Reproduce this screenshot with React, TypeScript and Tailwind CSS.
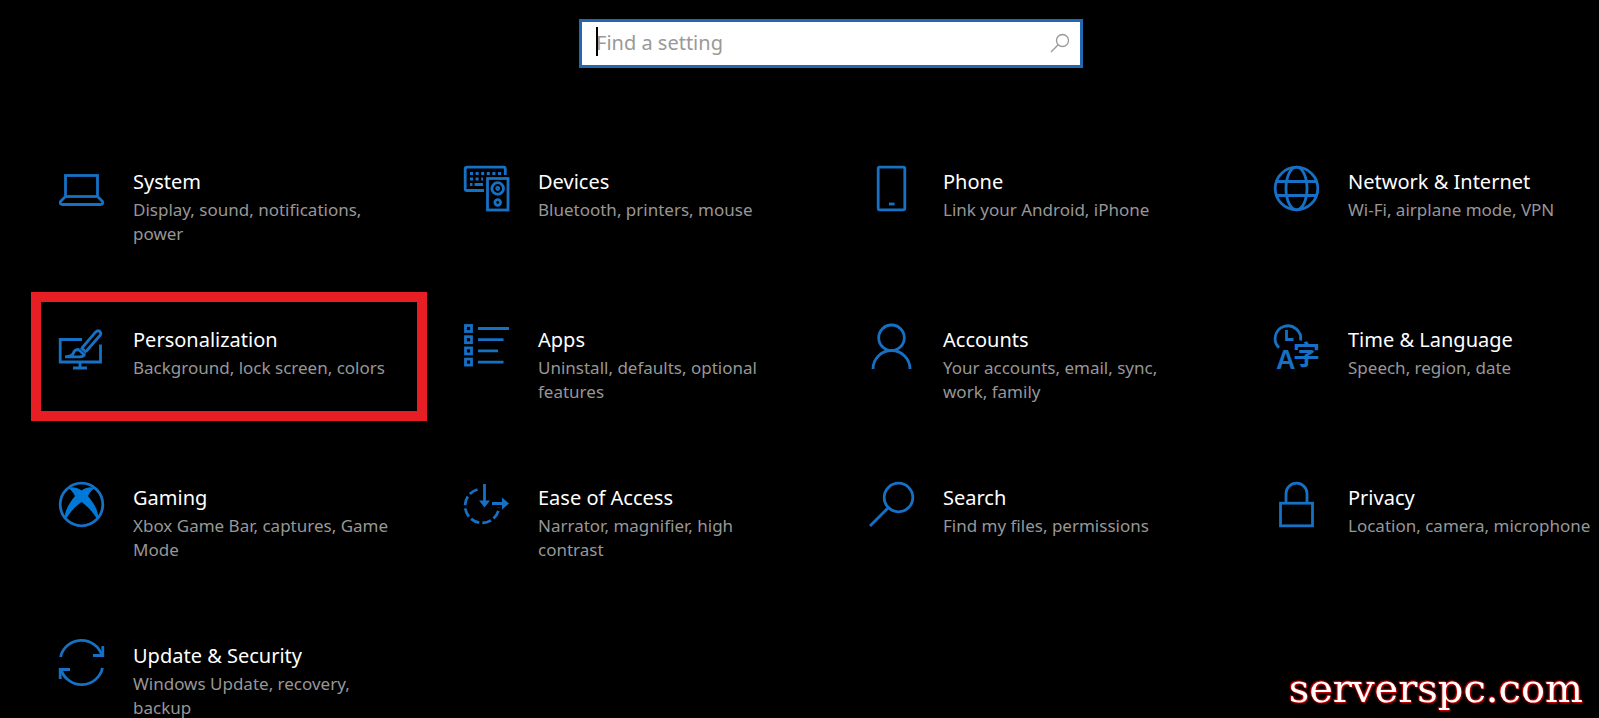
import type { ReactNode } from "react";

type Category = {
  title: string;
  description: string;
  icon: ReactNode;
  highlight?: boolean;
};

const categories: Category[] = [
  {
    title: "System",
    description: "Display, sound, notifications, power",
    icon: (
      <>
        <rect x="6.5" y="9.5" width="32" height="21" />
        <path d="M6 31 L1.5 35.5 Q0.5 38.5 3.5 38.5 H41.5 Q44.5 38.5 43.5 35.5 L39 31" />
      </>
    ),
  },
  {
    title: "Devices",
    description: "Bluetooth, printers, mouse",
    icon: (
      <>
        <path d="M20 24.5 H3 Q1.2 24.5 1.2 22.7 V3 Q1.2 1.2 3 1.2 H39.5 Q41.3 1.2 41.3 3 V9" />
        <path d="M6 7.5 H38" strokeDasharray="3 2.6" />
        <path d="M6 13 H19" strokeDasharray="3 2.6" />
        <path d="M6 18.5 H8.5 M10.5 18.5 H19" />
        <rect x="23.5" y="12.5" width="20.5" height="31.5" />
        <circle cx="33.7" cy="22.5" r="5.8" />
        <circle cx="33.7" cy="22.5" r="1" />
        <circle cx="33.7" cy="36.5" r="2.8" />
      </>
    ),
  },
  {
    title: "Phone",
    description: "Link your Android, iPhone",
    icon: (
      <>
        <rect x="9.2" y="1.2" width="26.6" height="42.6" rx="1.5" />
        <path d="M20 38 H25.5" />
      </>
    ),
  },
  {
    title: "Network & Internet",
    description: "Wi-Fi, airplane mode, VPN",
    icon: (
      <>
        <circle cx="22.5" cy="22.5" r="21.3" />
        <ellipse cx="22.5" cy="22.5" rx="10.5" ry="21.3" />
        <path d="M2.5 15.5 H42.5 M2.5 29.5 H42.5" />
      </>
    ),
  },
  {
    title: "Personalization",
    description: "Background, lock screen, colors",
    highlight: true,
    icon: (
      <>
        <path d="M23 15.5 H1.2 V38 H41.5 V20.5" />
        <path d="M21 38 V44 M14 44 H28" />
        <path d="M23 24 L36.5 8.2 Q39 5.8 41 7.6 Q42.8 9.6 40.5 12 L27 27.5" />
        <path d="M22 23.5 L27.5 28.5 M20 26 L25.5 31" />
        <path d="M20.5 25.5 Q15 25.5 14.5 29 Q13.5 32.5 6 32.8 H20 Q25.5 33 25.5 29.5" />
      </>
    ),
  },
  {
    title: "Apps",
    description: "Uninstall, defaults, optional features",
    icon: (
      <>
        <rect x="1.5" y="1.5" width="6" height="6" />
        <rect x="1.5" y="12.7" width="6" height="6" />
        <rect x="1.5" y="23.9" width="6" height="6" />
        <rect x="1.5" y="35.1" width="6" height="6" />
        <path d="M14 4.5 H45 M14 15.7 H39.5 M14 26.9 H34 M14 38.1 H39.5" />
      </>
    ),
  },
  {
    title: "Accounts",
    description: "Your accounts, email, sync, work, family",
    icon: (
      <>
        <circle cx="22.5" cy="13.8" r="12.8" />
        <path d="M4 45 A18.5 18.5 0 0 1 41 45" />
      </>
    ),
  },
  {
    title: "Time & Language",
    description: "Speech, region, date",
    icon: (
      <>
        <path d="M5 23.8 A12.8 12.8 0 1 1 26.6 16.5" />
        <path d="M12.5 6 V15.5 H19.5" />
        <text x="2" y="45" fontSize="27" fontWeight="700" className="fill-[#1670c4] stroke-none font-['Liberation_Sans']">
          A
        </text>
        <text x="19" y="41" fontSize="27" fontWeight="700" className="fill-[#1670c4] stroke-none font-['Noto_Sans_CJK_SC',sans-serif]">
          字
        </text>
      </>
    ),
  },
  {
    title: "Gaming",
    description: "Xbox Game Bar, captures, Game Mode",
    icon: (
      <>
        <circle cx="22.5" cy="22.5" r="21.3" />
        <path
          className="fill-[#0078d7] stroke-none"
          d="M9 6 C13 4.5 18 5.5 22.5 8.5 C27 5.5 32 4.5 36 6 C33.5 7.5 31 10 29 14 C35 21 41 31 38.5 38.5 C36 32 29 25 22.5 20 C16 25 9 32 6.5 38.5 C4 31 10 21 16 14 C14 10 11.5 7.5 9 6 Z"
        />
      </>
    ),
  },
  {
    title: "Ease of Access",
    description: "Narrator, magnifier, high contrast",
    icon: (
      <>
        <path d="M13.5 7.5 A17 17 0 1 0 35 25.5" strokeDasharray="9 3.2" />
        <path d="M20.5 2 V21 M28 21.5 H42" />
        <path className="fill-[#1670c4] stroke-none" d="M15 18.5 H26 L20.5 25.5 Z M38 15.5 L45 21.5 L38 27.5 Z" />
      </>
    ),
  },
  {
    title: "Search",
    description: "Find my files, permissions",
    icon: (
      <>
        <circle cx="29.5" cy="15.5" r="14.3" />
        <path d="M19 26 L1 44" />
      </>
    ),
  },
  {
    title: "Privacy",
    description: "Location, camera, microphone",
    icon: (
      <>
        <rect x="6.5" y="21.2" width="32" height="22.6" />
        <path d="M12 21 V11.5 A10.5 10.3 0 0 1 33 11.5 V21" />
      </>
    ),
  },
  {
    title: "Update & Security",
    description: "Windows Update, recovery, backup",
    icon: (
      <>
        <path d="M1.5 17 A21.5 21.5 0 0 1 43 15.5" />
        <path d="M34 15.5 H43.8 V6" />
        <path d="M43.5 28 A21.5 21.5 0 0 1 2 29.5" />
        <path d="M11 29.5 H1.2 V39" />
      </>
    ),
  },
];

function CategoryTile({ title, description, icon, highlight }: Category) {
  return (
    <a href="#" className="relative flex items-start gap-7 min-h-[158px]">
      {highlight && (
        <span className="absolute -left-7 -top-8 w-[396px] h-[129px] border-[10px] border-[#e81e25]" />
      )}
      <svg
        viewBox="0 0 46 46"
        className="w-[46px] h-[46px] shrink-0 overflow-visible fill-none stroke-[#1670c4]"
        strokeWidth="2.8"
        aria-hidden="true"
      >
        {icon}
      </svg>
      <span className="block max-w-[260px]">
        <span className="block text-[20px] leading-8 text-white">{title}</span>
        <span className="block text-[17px] leading-6 text-[#979797]">{description}</span>
      </span>
    </a>
  );
}

export default function App() {
  return (
    <div className="min-h-screen bg-black font-['Noto_Sans',sans-serif]">
      <header className="flex justify-center pt-[19px] pl-[63px]">
        <label className="relative flex items-center w-[504px] h-[49px] pl-[14px] pr-[10px] pb-[2px] bg-white border-[3px] border-[#2168ae]">
          <span className="absolute left-[14px] top-[5px] w-[2px] h-[29px] bg-black" />
          <input
            type="text"
            aria-label="Find a setting"
            placeholder="Find a setting"
            className="flex-1 min-w-0 text-[20px] text-black outline-none placeholder:text-[#999999]"
          />
          <svg viewBox="0 0 20 20" className="w-5 h-5 fill-none stroke-[#999999]" strokeWidth="1.3" aria-hidden="true">
            <circle cx="12.5" cy="7.5" r="6" />
            <path d="M8.2 11.8 L1 19" />
          </svg>
        </label>
      </header>

      {/* Settings categories */}
      <main className="grid grid-cols-[405fr_405fr_405fr_325fr] pt-[98px] pl-[59px]">
        {categories.map((category) => (
          <CategoryTile key={category.title} {...category} />
        ))}
      </main>

      {/* Watermark */}
      <span className="fixed right-4 bottom-[6px] font-['DejaVu_Serif',serif] text-[40px] leading-[48px] text-white [text-shadow:1px_1px_1px_#d00000,-1px_-1px_1px_#d00000,0_0_3px_#d00000]">
        serverspc.com
      </span>
    </div>
  );
}
